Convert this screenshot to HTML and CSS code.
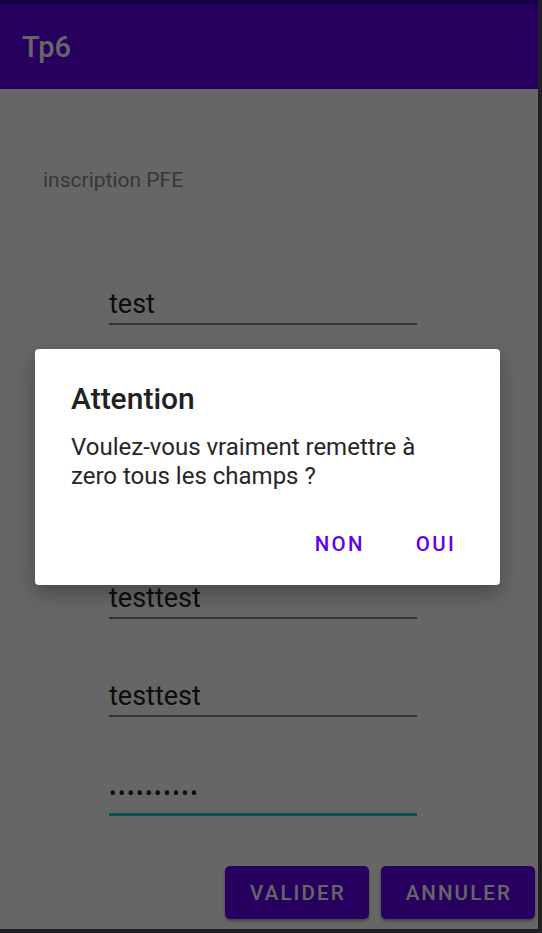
FILE: index.html
```html
<!DOCTYPE html>
<html lang="fr">
<head>
<meta charset="utf-8">
<title>Tp6</title>
<link rel="stylesheet" href="styles.css">
</head>
<body>
<div class="device">
  <div class="screen">
    <div class="status-bar"></div>
    <header class="app-bar"><span class="app-title">Tp6</span></header>
    <main class="content">
      <p class="heading">inscription PFE</p>
      <div class="fields">
        <div class="field"><span class="value">test</span></div>
        <div class="field"><span class="value"></span></div>
        <div class="field"><span class="value"></span></div>
        <div class="field"><span class="value">testtest</span></div>
        <div class="field"><span class="value">testtest</span></div>
        <div class="field focused"><span class="value dots">••••••••••</span></div>
      </div>
      <div class="actions">
        <button class="btn">VALIDER</button>
        <button class="btn">ANNULER</button>
      </div>
    </main>
    <div class="scrim"></div>
    <div class="dialog">
      <h2 class="dialog-title">Attention</h2>
      <p class="dialog-text">Voulez-vous vraiment remettre à zero tous les champs ?</p>
      <div class="dialog-actions">
        <button class="dlg-btn">NON</button>
        <button class="dlg-btn">OUI</button>
      </div>
    </div>
  </div>
</div>
</body>
</html>
```
FILE: styles.css
```css
html, body {
  margin: 0;
  padding: 0;
  background: #1f1f24;
}
body {
  font-family: Roboto, "Noto Sans", sans-serif;
  width: 542px;
  height: 933px;
  overflow: hidden;
}
.device {
  width: 542px;
  height: 933px;
  background: #1f1f24;
}
.screen {
  position: relative;
  width: 538px;
  height: 929px;
  background: #ffffff;
  overflow: hidden;
  display: flex;
  flex-direction: column;
}
.status-bar {
  height: 4px;
  background: #3700b3;
  flex: none;
}
.app-bar {
  height: 85px;
  background: #6200ee;
  flex: none;
  display: flex;
  align-items: center;
  padding-left: 22px;
  box-sizing: border-box;
}
.app-title {
  color: #ffffff;
  font-size: 29px;
  font-weight: 500;
  margin-top: 1px;
}
.content {
  flex: 1;
  display: flex;
  flex-direction: column;
}
.heading {
  margin: 79px 0 0 43px;
  font-size: 21px;
  line-height: 24px;
  color: #8a8a8a;
}
.fields {
  margin-top: 87px;
  margin-left: 109px;
  display: flex;
  flex-direction: column;
  gap: 52px;
}
.field {
  width: 308px;
  height: 46px;
  box-sizing: border-box;
  border-bottom: 2px solid #808080;
  display: flex;
  align-items: flex-end;
  padding-bottom: 4px;
}
.field.focused {
  border-bottom: 3px solid #03dac5;
  height: 47px;
}
.value {
  font-size: 27px;
  line-height: 30px;
  color: #212121;
}
.dots {
  font-size: 22px;
  letter-spacing: 1.6px;
  margin-bottom: 0;
}
.actions {
  margin-top: 50px;
  display: flex;
  justify-content: flex-end;
  gap: 12px;
  padding-right: 3px;
}
.btn {
  height: 53px;
  border: none;
  border-radius: 5px;
  background: #6200ee;
  color: #ffffff;
  font-family: Roboto, sans-serif;
  font-size: 20.5px;
  font-weight: 500;
  letter-spacing: 2.1px;
  padding: 0 23px 0 25px;
  box-shadow: 0 2px 3px rgba(0,0,0,0.35);
}
.scrim {
  position: absolute;
  inset: 0;
  background: rgba(0, 0, 0, 0.6);
}
.dialog {
  position: absolute;
  left: 35px;
  top: 349px;
  width: 465px;
  height: 236px;
  box-sizing: border-box;
  background: #ffffff;
  border-radius: 4px;
  box-shadow: 0 8px 20px rgba(0,0,0,0.3);
  padding: 34px 36px 0 36px;
  display: flex;
  flex-direction: column;
}
.dialog-title {
  margin: 0;
  font-size: 30px;
  line-height: 32px;
  font-weight: 500;
  color: #212121;
}
.dialog-text {
  margin: 18px 0 0 0;
  font-size: 24px;
  line-height: 29px;
  color: #262626;
  padding-right: 20px;
}
.dialog-actions {
  margin-top: 33px;
  display: flex;
  justify-content: flex-end;
  gap: 15px;
  margin-right: -10px;
}
.dlg-btn {
  border: none;
  background: transparent;
  color: #6200ee;
  font-family: Roboto, sans-serif;
  font-size: 20.5px;
  font-weight: 500;
  letter-spacing: 2.3px;
  padding: 0 18px;
  height: 40px;
}
```
